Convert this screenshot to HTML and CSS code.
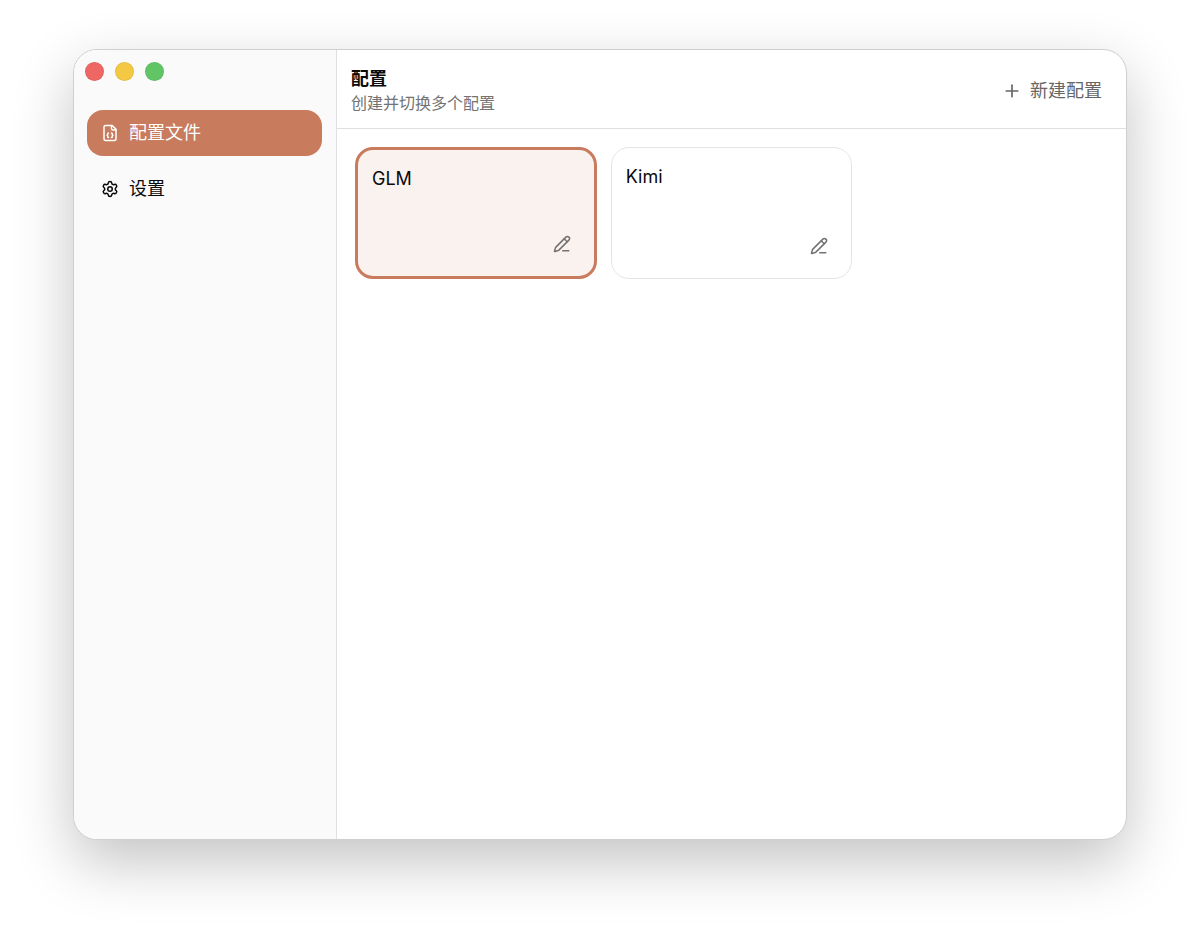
FILE: index.html
```
<!DOCTYPE html>
<html lang="zh-CN">
<head>
  <meta charset="UTF-8" />
  <meta name="viewport" content="width=device-width, initial-scale=1.0"/>
  <title>配置</title>
  <link rel="stylesheet" href="styles.css">
</head>
<body>

  <div class="window">
    <!-- 侧边栏 -->
    <aside class="sidebar">
      <div class="traffic-lights">
        <button class="light light-close" aria-label="关闭"></button>
        <button class="light light-min" aria-label="最小化"></button>
        <button class="light light-max" aria-label="最大化"></button>
      </div>

      <nav class="nav">
        <a href="#configs" class="nav-item active">
          <svg class="icon" viewBox="0 0 24 24" aria-hidden="true">
            <path d="M15 2H6a2 2 0 0 0-2 2v16a2 2 0 0 0 2 2h12a2 2 0 0 0 2-2V7Z"/>
            <path d="M14 2v4a2 2 0 0 0 2 2h4"/>
            <path d="M10 12a1 1 0 0 0-1 1v1a1 1 0 0 1-1 1 1 1 0 0 1 1 1v1a1 1 0 0 0 1 1"/>
            <path d="M14 18a1 1 0 0 0 1-1v-1a1 1 0 0 1 1-1 1 1 0 0 1-1-1v-1a1 1 0 0 0-1-1"/>
          </svg>
          配置文件
        </a>
        <a href="#settings" class="nav-item">
          <svg class="icon" viewBox="0 0 24 24" aria-hidden="true">
            <path d="M9.671 4.136a2.34 2.34 0 0 1 4.659 0 2.34 2.34 0 0 0 3.319 1.915 2.34 2.34 0 0 1 2.33 4.033 2.34 2.34 0 0 0 0 3.831 2.34 2.34 0 0 1-2.33 4.033 2.34 2.34 0 0 0-3.319 1.915 2.34 2.34 0 0 1-4.659 0 2.34 2.34 0 0 0-3.32-1.915 2.34 2.34 0 0 1-2.33-4.033 2.34 2.34 0 0 0 0-3.831A2.34 2.34 0 0 1 6.35 6.051a2.34 2.34 0 0 0 3.319-1.915"/>
            <circle cx="12" cy="12" r="3"/>
          </svg>
          设置
        </a>
      </nav>
    </aside>

    <!-- 主内容区 -->
    <main class="main">
      <header class="header">
        <div>
          <h1 class="title">配置</h1>
          <p class="subtitle">创建并切换多个配置</p>
        </div>
        <button class="btn-new">
          <svg class="icon" viewBox="0 0 24 24" aria-hidden="true">
            <path d="M5 12h14"/>
            <path d="M12 5v14"/>
          </svg>
          新建配置
        </button>
      </header>

      <!-- 配置卡片 -->
      <div class="card-grid">
        <div class="card active">
          <button class="card-name" aria-pressed="true">GLM</button>
          <button class="btn-edit" aria-label="编辑 GLM">
            <svg class="icon" viewBox="0 0 24 24" aria-hidden="true">
              <path d="M13 21h8"/>
              <path d="m15 5 4 4"/>
              <path d="M21.174 6.812a1 1 0 0 0-3.986-3.987L3.842 16.174a2 2 0 0 0-.5.83l-1.321 4.352a.5.5 0 0 0 .623.622l4.353-1.32a2 2 0 0 0 .83-.497z"/>
            </svg>
          </button>
        </div>

        <div class="card">
          <button class="card-name" aria-pressed="false">Kimi</button>
          <button class="btn-edit" aria-label="编辑 Kimi">
            <svg class="icon" viewBox="0 0 24 24" aria-hidden="true">
              <path d="M13 21h8"/>
              <path d="m15 5 4 4"/>
              <path d="M21.174 6.812a1 1 0 0 0-3.986-3.987L3.842 16.174a2 2 0 0 0-.5.83l-1.321 4.352a.5.5 0 0 0 .623.622l4.353-1.32a2 2 0 0 0 .83-.497z"/>
            </svg>
          </button>
        </div>
      </div>
    </main>
  </div>

</body>
</html>
```
FILE: styles.css
```
* {
  box-sizing: border-box;
}

body {
  display: flex;
  min-height: 100vh;
  margin: 0;
  padding: 49px 73px 97px;
  background: #fff;
  color: #0a0a0a;
  font-family: Inter, "Noto Sans CJK SC", sans-serif;
  font-size: 18px;
  line-height: 26px;
}

button {
  padding: 0;
  border: none;
  background: none;
  color: inherit;
  font: inherit;
  cursor: pointer;
}

.icon {
  flex: none;
  width: 18px;
  height: 18px;
  fill: none;
  stroke: currentColor;
  stroke-width: 2;
  stroke-linecap: round;
  stroke-linejoin: round;
}

/* 窗口 */
.window {
  display: flex;
  flex: 1;
  overflow: hidden;
  border: 1px solid #cfcfcf;
  border-radius: 24px;
  background: #fff;
  box-shadow: 0 22px 60px rgba(0, 0, 0, 0.24);
}

/* 侧边栏 */
.sidebar {
  flex: none;
  width: 263px;
  padding: 12px 14px 12px 13px;
  border-right: 1px solid #e0e0e0;
  background: #fafafa;
}

.traffic-lights {
  display: flex;
  gap: 11px;
  margin: 0 -2px 29px;
}

.light {
  width: 19px;
  height: 19px;
  border: 1px solid rgba(0, 0, 0, 0.06);
  border-radius: 50%;
}

.light-close {
  background: #ee6764;
}

.light-min {
  background: #f3c944;
}

.light-max {
  background: #62c565;
}

.nav {
  display: flex;
  flex-direction: column;
  gap: 10px;
}

.nav-item {
  display: flex;
  align-items: center;
  gap: 10px;
  padding: 10px 14px;
  border-radius: 16px;
  color: #0a0a0a;
  text-decoration: none;
}

.nav-item.active {
  background: #c97b5d;
  color: #fff;
}

/* 主内容区 */
.main {
  flex: 1;
  min-width: 0;
}

.header {
  display: flex;
  align-items: center;
  justify-content: space-between;
  padding: 17px 24px 13px 14px;
  border-bottom: 1px solid #e0e0e0;
}

.title {
  margin: 0;
  font-size: 18px;
  font-weight: 700;
  line-height: 24px;
}

.subtitle {
  margin: 0;
  color: #737373;
  font-size: 16px;
  line-height: 24px;
}

.btn-new {
  display: flex;
  align-items: center;
  gap: 8px;
  color: #666;
}

.btn-new .icon {
  width: 20px;
  height: 20px;
}

.card-grid {
  display: grid;
  grid-template-columns: repeat(3, 1fr);
  gap: 14px;
  padding: 18px;
}

.card {
  display: flex;
  flex-direction: column;
  justify-content: space-between;
  min-height: 132px;
  padding: 16px 14px 14px;
  border: 1px solid #e5e5e5;
  border-radius: 18px;
}

.card.active {
  border: 3px solid #c97b5d;
  background: #faf2ef;
}

.card-name {
  align-self: flex-start;
}

.btn-edit {
  display: flex;
  align-self: flex-end;
  padding: 9px;
  color: #737373;
}
```
